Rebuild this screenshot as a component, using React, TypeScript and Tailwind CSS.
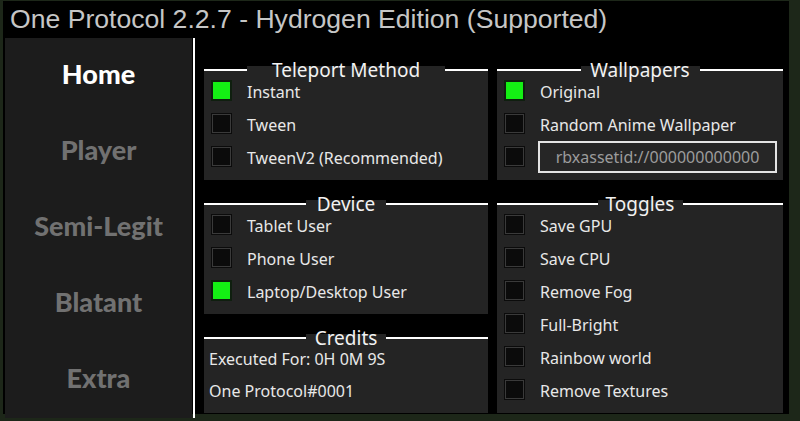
type Row = { label: string; on?: boolean };

const rowFont = { fontFamily: "'Noto Sans', sans-serif" };

function Check({ on }: { on?: boolean }) {
  if (on) {
    return (
      <div className="w-[21px] h-[21px] shrink-0 bg-[#0f1f0f] p-[2px]">
        <div className="w-full h-full bg-[#14f014]" />
      </div>
    );
  }
  return (
    <div className="w-[21px] h-[21px] shrink-0 bg-[#0b0b0b] p-[1px]">
      <div className="w-full h-full border border-[#3a3a3a] bg-[#0b0b0b]" />
    </div>
  );
}

function Heading({ title, labelClass }: { title: string; labelClass: string }) {
  return (
    <div className="relative z-10 flex h-[14px] bg-[linear-gradient(to_bottom,#000_11px,#242424_11px)]">
      <div className="flex-1 h-[2px] mt-[9px] bg-white" />
      <div className={`h-[8px] mt-[6px] bg-[#242424] flex justify-center ${labelClass}`}>
        <span
          className="-mt-[5px] h-[18px] text-[19px] leading-[18px] text-[#f2f2f2] whitespace-nowrap"
          style={rowFont}
        >
          {title}
        </span>
      </div>
      <div className="flex-1 h-[2px] mt-[9px] bg-white" />
    </div>
  );
}

function CheckRow({ label, on }: Row) {
  return (
    <div className="flex items-center h-[33px] pl-[7px]">
      <Check on={on} />
      <span
        className="ml-[15px] mt-[2px] text-[16px] leading-[18px] text-[#e8e8e8] whitespace-nowrap"
        style={rowFont}
      >
        {label}
      </span>
    </div>
  );
}

const teleport: Row[] = [
  { label: "Instant", on: true },
  { label: "Tween" },
  { label: "TweenV2 (Recommended)" },
];

const device: Row[] = [
  { label: "Tablet User" },
  { label: "Phone User" },
  { label: "Laptop/Desktop User", on: true },
];

const toggles: Row[] = [
  { label: "Save GPU" },
  { label: "Save CPU" },
  { label: "Remove Fog" },
  { label: "Full-Bright" },
  { label: "Rainbow world" },
  { label: "Remove Textures" },
];

const tabs = ["Home", "Player", "Semi-Legit", "Blatant", "Extra"];

export default function App() {
  return (
    <div className="w-[800px] h-[421px] bg-[#1d2719] overflow-hidden">
      <div className="ml-[3px] mt-[1px] w-[786px] h-[413px] bg-black flex flex-col">
        <div
          className="h-[37px] pl-[7px] flex items-center text-[26.6px] text-[#c6c6c6] whitespace-nowrap"
          style={{ fontFamily: "'Liberation Sans', Arial, sans-serif" }}
        >
          One Protocol 2.2.7 - Hydrogen Edition (Supported)
        </div>
        <div className="h-[2px] bg-white" />
        <div className="flex flex-1">
          <div
            className="ml-[2px] w-[187px] bg-[#1c1c1c] flex flex-col"
            style={{ fontFamily: "Lato, 'Noto Sans', sans-serif" }}
          >
            {tabs.map((t, i) => (
              <div
                key={t}
                className={`h-[76px] pb-[4px] flex items-center justify-center text-[27px] font-black ${
                  i === 0 ? "text-white" : "text-[#717171]"
                }`}
              >
                {t}
              </div>
            ))}
          </div>
          <div className="ml-[1px] w-[2px] bg-white" />
          <div className="flex-1 pt-[22px] pl-[9px] pr-[6px] pb-[5px] grid grid-cols-[284px_286px] gap-x-[9px]">
            <div className="flex flex-col gap-[14px]">
              <div className="flex flex-col">
                <Heading title="Teleport Method" labelClass="w-[198px]" />
                <div className="bg-[#242424] pb-[7px]">
                  {teleport.map((r) => (
                    <CheckRow key={r.label} {...r} />
                  ))}
                </div>
              </div>
              <div className="flex flex-col">
                <Heading title="Device" labelClass="w-[80px]" />
                <div className="bg-[#242424] pb-[7px]">
                  {device.map((r) => (
                    <CheckRow key={r.label} {...r} />
                  ))}
                </div>
              </div>
              <div className="flex flex-col flex-1">
                <Heading title="Credits" labelClass="w-[80px]" />
                <div
                  className="bg-[#242424] flex-1 pl-[5px] text-[16px] leading-[18px] text-[#e8e8e8]"
                  style={rowFont}
                >
                  <div className="h-[32px] pt-[2px] flex items-center">Executed For: 0H 0M 9S</div>
                  <div className="h-[32px] pt-[2px] flex items-center">One Protocol#0001</div>
                </div>
              </div>
            </div>
            <div className="flex flex-col gap-[14px]">
              <div className="flex flex-col">
                <Heading title="Wallpapers" labelClass="w-[119px]" />
                <div className="bg-[#242424] pb-[7px]">
                  <CheckRow label="Original" on />
                  <CheckRow label="Random Anime Wallpaper" />
                  <div className="flex items-center h-[33px] pl-[7px]">
                    <Check />
                    <div
                      className="ml-[13px] w-[239px] h-[32px] border-2 border-[#e4e4e4] bg-[#262626] flex items-center justify-center text-[16px] text-[#9c9c9c]"
                      style={rowFont}
                    >
                      rbxassetid://000000000000
                    </div>
                  </div>
                </div>
              </div>
              <div className="flex flex-col flex-1">
                <Heading title="Toggles" labelClass="w-[85px]" />
                <div className="bg-[#242424] flex-1">
                  {toggles.map((r) => (
                    <CheckRow key={r.label} {...r} />
                  ))}
                </div>
              </div>
            </div>
          </div>
        </div>
      </div>
    </div>
  );
}
